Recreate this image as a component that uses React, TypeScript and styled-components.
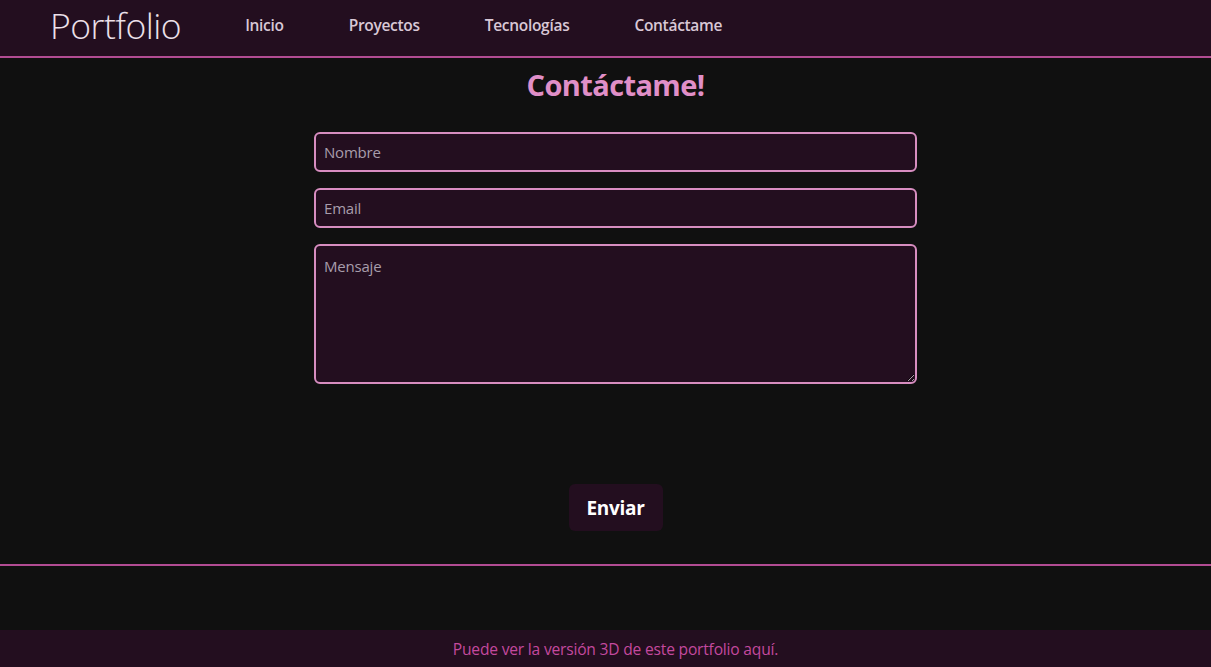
import React from "react";
import styled, { createGlobalStyle } from "styled-components";

const Global = createGlobalStyle`
  html, body { margin: 0; padding: 0; background: #101010; }
  body { font-family: "Open Sans", "Noto Sans", sans-serif; }
  * { box-sizing: border-box; }
`;

const Page = styled.div`
  min-height: 667px;
  display: flex;
  flex-direction: column;
  background: #101010;
`;

const Header = styled.header`
  height: 58px;
  background: #230e1f;
  border-bottom: 2px solid #b24c93;
  display: flex;
  align-items: center;
  padding-left: 50px;
`;

const Brand = styled.div`
  font-family: "Open Sans", sans-serif;
  font-weight: 300;
  font-size: 35.5px;
  color: #ece0ea;
  letter-spacing: -0.5px;
  margin-right: 64px;
  margin-top: -6px;
`;

const Nav = styled.nav`
  display: flex;
  gap: 65px;
  margin-top: -6px;
`;

const NavLink = styled.a`
  font-family: "Open Sans", sans-serif;
  font-weight: 600;
  font-size: 15.5px;
  color: #d9c8d6;
  letter-spacing: -0.3px;
  text-decoration: none;
`;

const Main = styled.main`
  display: flex;
  flex-direction: column;
  align-items: center;
  border-bottom: 2px solid #b24c93;
  height: 508px;
  padding-left: 20px;
`;

const Title = styled.h1`
  margin: 7px 0 0;
  font-family: "Open Sans", sans-serif;
  font-weight: 700;
  font-size: 29px;
  letter-spacing: -0.6px;
  color: #e08fc8;
`;

const Form = styled.form`
  width: 603px;
  display: flex;
  flex-direction: column;
  align-items: center;
  gap: 16px;
  margin-top: 28px;
`;

const fieldStyle = `
  width: 100%;
  background: #230e1f;
  border: 2px solid #d78dc0;
  border-radius: 6px;
  font-family: "Open Sans", sans-serif;
  font-size: 15px;
  color: #e0d0dc;
  padding: 0 8px;
  outline: none;
  letter-spacing: -0.2px;
  &::placeholder { color: #a89dab; }
`;

const Input = styled.input`
  ${fieldStyle}
  height: 40px;
`;

const TextArea = styled.textarea`
  ${fieldStyle}
  height: 140px;
  padding-top: 10px;
  resize: vertical;
`;

const Button = styled.button`
  margin-top: 84px;
  width: 94px;
  height: 47px;
  background: #230e1f;
  border: none;
  border-radius: 6px;
  font-family: "Open Sans", sans-serif;
  font-weight: 700;
  font-size: 19px;
  color: #ffffff;
  letter-spacing: -0.3px;
  cursor: pointer;
`;

const Spacer = styled.div`
  height: 64px;
`;

const Footer = styled.footer`
  height: 37px;
  background: #230e1f;
  display: flex;
  align-items: center;
  justify-content: center;
  padding-left: 20px;
  font-family: "Open Sans", sans-serif;
  font-size: 15.6px;
  letter-spacing: -0.2px;
  color: #c4499e;
`;

export default function App() {
  return (
    <>
      <Global />
      <Page>
        <Header>
          <Brand>Portfolio</Brand>
          <Nav>
            <NavLink href="#">Inicio</NavLink>
            <NavLink href="#">Proyectos</NavLink>
            <NavLink href="#">Tecnologías</NavLink>
            <NavLink href="#">Contáctame</NavLink>
          </Nav>
        </Header>
        <Main>
          <Title>Contáctame!</Title>
          <Form onSubmit={(e) => e.preventDefault()}>
            <Input placeholder="Nombre" />
            <Input placeholder="Email" />
            <TextArea placeholder="Mensaje" />
            <Button type="submit">Enviar</Button>
          </Form>
        </Main>
        <Spacer />
        <Footer>Puede ver la versión 3D de este portfolio aquí.</Footer>
      </Page>
    </>
  );
}
